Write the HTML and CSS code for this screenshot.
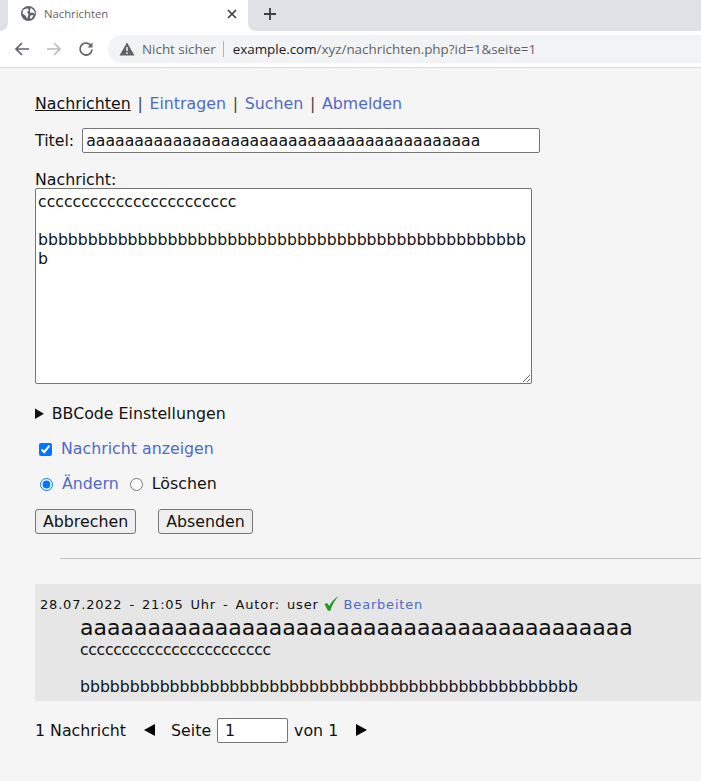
FILE: index.html
```html
<!DOCTYPE html>
<html lang="de">
<head>
  <meta charset="UTF-8">
  <title>Nachrichten</title>
  <link rel="stylesheet" href="styles.css">
</head>
<body>

  <!-- Browser tab strip -->
  <div class="tabstrip">
    <div class="tab-edge"></div>
    <div class="tab">
      <svg class="favicon" width="15" height="15" viewBox="0 0 16 16">
        <circle cx="8" cy="8" r="8" fill="#5f6368"/>
        <path d="M2.5 4 L7 2.5 L8.5 4.5 L6.5 6.5 L8 9 L6.5 13.5 L5 10.5 L1.5 8 Z M10.5 1.8 L14 5 L14.8 8.5 L12 7 L10 7.5 L9.5 5 Z M10 10 L13.5 9.5 L11.5 13 L9.5 13.5 Z" fill="#fff"/>
      </svg>
      <span class="tab-title">Nachrichten</span>
      <svg class="tab-close" width="10" height="10" viewBox="0 0 10 10">
        <path d="M1 1 L9 9 M9 1 L1 9" stroke="#3c4043" stroke-width="1.7" fill="none"/>
      </svg>
    </div>
    <div class="tab-rest">
      <svg class="new-tab" width="12" height="12" viewBox="0 0 12 12">
        <path d="M6 0 V12 M0 6 H12" stroke="#3c4043" stroke-width="1.8" fill="none"/>
      </svg>
    </div>
  </div>

  <!-- Browser address bar -->
  <div class="toolbar">
    <svg class="nav-icon" width="16" height="16" viewBox="0 0 16 16">
      <path d="M15 8 H2 M8 2 L2 8 L8 14" stroke="#5f6368" stroke-width="1.7" fill="none"/>
    </svg>
    <svg class="nav-icon" width="16" height="16" viewBox="0 0 16 16">
      <path d="M1 8 H14 M8 2 L14 8 L8 14" stroke="#b9bbbe" stroke-width="1.7" fill="none"/>
    </svg>
    <svg class="nav-icon nav-last" width="16" height="16" viewBox="0 0 16 16">
      <path d="M13.2 5 A6 6 0 1 0 14 8.5" stroke="#5f6368" stroke-width="1.7" fill="none"/>
      <path d="M14.5 1.5 V6.5 H9.5 Z" fill="#5f6368"/>
    </svg>
    <div class="omnibox">
      <svg class="warn" width="16" height="14" viewBox="0 0 16 14">
        <path d="M8 0.5 L15.5 13.5 H0.5 Z" fill="#5f6368"/>
        <path d="M8 5 V9 M8 10.2 V12" stroke="#f1f3f4" stroke-width="1.5" fill="none"/>
      </svg>
      <span class="not-secure">Nicht sicher</span>
      <span class="url"><span class="host">example.com</span>/xyz/nachrichten.php?id=1&amp;seite=1</span>
    </div>
  </div>

  <div class="page">
    <div class="menu">
      <a href="#" class="current">Nachrichten</a> |
      <a href="#">Eintragen</a> |
      <a href="#">Suchen</a> |
      <a href="#">Abmelden</a>
    </div>

    <form class="edit-form">
      <div class="title-row">
        <label for="titel">Titel:</label>
        <input type="text" id="titel" value="aaaaaaaaaaaaaaaaaaaaaaaaaaaaaaaaaaaaaaaaa">
      </div>

      <label class="msg-label" for="nachricht">Nachricht:</label>
      <textarea id="nachricht">ccccccccccccccccccccccc

bbbbbbbbbbbbbbbbbbbbbbbbbbbbbbbbbbbbbbbbbbbbbbbbbb</textarea>

      <details class="bbcode">
        <summary>BBCode Einstellungen</summary>
      </details>

      <div class="check-row">
        <input type="checkbox" id="anzeigen" checked>
        <label for="anzeigen" class="blue">Nachricht anzeigen</label>
      </div>

      <div class="radio-row">
        <input type="radio" name="aktion" id="aendern" checked>
        <label for="aendern" class="blue">Ändern</label>
        <input type="radio" name="aktion" id="loeschen">
        <label for="loeschen">Löschen</label>
      </div>

      <div class="buttons">
        <button type="button">Abbrechen</button>
        <button type="button">Absenden</button>
      </div>
    </form>

    <hr class="divider">

    <div class="entry">
      <div class="entry-meta">
        28.07.2022 - 21:05 Uhr - Autor: user
        <svg class="tick" width="15" height="17" viewBox="0 0 15 17">
          <path d="M0.5 9 L3 8 L5.2 11 C7.5 7 10.5 3.5 14.5 1 C11 5 8 10 6.3 15.8 L4 15.8 Z" fill="#1e9a1e"/>
        </svg>
        <a href="#">Bearbeiten</a>
      </div>
      <div class="entry-body">
        <div class="entry-title">aaaaaaaaaaaaaaaaaaaaaaaaaaaaaaaaaaaaaaaaa</div>
        <div class="entry-text"><span class="narrow">ccccccccccccccccccccccc</span><br><br>bbbbbbbbbbbbbbbbbbbbbbbbbbbbbbbbbbbbbbbbbbbbbbbbbb</div>
      </div>
    </div>

    <div class="pager">
      <span>1 Nachricht</span>
      <span class="arrow-left"></span>
      <span>Seite</span>
      <input type="text" value="1">
      <span>von 1</span>
      <span class="arrow-right"></span>
    </div>
  </div>

</body>
</html>
```

FILE: styles.css
```css
html, body {
  margin: 0;
  padding: 0;
}

body {
  width: 701px;
  height: 781px;
  overflow: hidden;
  background-color: #f5f5f5;
  color: #111;
  font-family: "DejaVu Sans", Verdana, sans-serif;
  font-size: 15.8px;
}

a {
  color: #4f6ac8;
  text-decoration: none;
}

/* browser chrome */
.tabstrip {
  display: flex;
  height: 31px;
  background-color: #fff;
}

.tab-edge {
  width: 8px;
  background-color: #dee1e6;
  border-bottom-right-radius: 8px;
}

.tab {
  display: flex;
  align-items: center;
  box-sizing: border-box;
  width: 240px;
  padding: 0 11px 4px 13px;
}

.favicon {
  flex: none;
}

.tab-title {
  flex: 1;
  margin-left: 8px;
  color: #5f6368;
  font-family: "Open Sans", sans-serif;
  font-size: 11.3px;
}

.tab-rest {
  display: flex;
  flex: 1;
  align-items: center;
  padding: 0 0 3px 16px;
  background-color: #dee1e6;
  border-bottom-left-radius: 8px;
}

.toolbar {
  display: flex;
  align-items: center;
  box-sizing: border-box;
  height: 37px;
  padding-left: 14px;
  background-color: #fff;
  border-bottom: 1px solid #dadce0;
}

.nav-icon {
  flex: none;
  margin-right: 16px;
}

.nav-last {
  margin-right: 14px;
}

.omnibox {
  display: flex;
  flex: 1;
  align-items: center;
  height: 28px;
  padding-left: 11px;
  background-color: #f1f3f4;
  border-radius: 14px 0 0 14px;
  font-family: "Open Sans", sans-serif;
  font-size: 13.4px;
  color: #5f6368;
}

.not-secure {
  margin-left: 7px;
  padding-right: 7px;
  margin-right: 9px;
  border-right: 1px solid #b0b3b7;
  line-height: 16px;
}

.host {
  color: #202124;
}

/* page */
.page {
  padding: 26px 0 0 35px;
}

.menu {
  color: #444;
  line-height: 20px;
  word-spacing: 1.7px;
}

.menu .current {
  color: #111;
  text-decoration: underline;
}

.title-row {
  display: flex;
  align-items: center;
  margin-top: 14px;
}

.title-row input {
  box-sizing: border-box;
  width: 458px;
  height: 25px;
  margin-left: 8px;
  padding: 1px 3px;
  border: 1px solid #767676;
  border-radius: 2px;
  background-color: #fff;
  font-family: inherit;
  font-size: 15.7px;
  color: #111;
}

.msg-label {
  display: block;
  margin-top: 18px;
  line-height: 17px;
}

textarea {
  display: block;
  box-sizing: border-box;
  width: 497px;
  height: 196px;
  padding: 3px 2px 2px;
  border: 1px solid #767676;
  border-radius: 2px;
  background-color: #fff;
  font-family: inherit;
  font-size: 15.7px;
  line-height: 19px;
  color: #111;
}

.bbcode {
  margin-top: 20px;
  line-height: 20px;
}

.bbcode summary {
  cursor: pointer;
}

.check-row,
.radio-row {
  display: flex;
  align-items: center;
  line-height: 20px;
}

.check-row {
  margin-top: 15px;
}

.check-row input {
  width: 13px;
  height: 13px;
  margin: 0 9px 0 4px;
}

.radio-row {
  margin-top: 15px;
}

.radio-row input {
  width: 13px;
  height: 13px;
  margin: 0 9px 0 5px;
}

.radio-row label + input {
  margin-left: 11px;
}

.blue {
  color: #4f6ac8;
}

.buttons {
  display: flex;
  gap: 22px;
  margin-top: 15px;
}

button {
  box-sizing: border-box;
  height: 25px;
  padding: 0 7px;
  border: 1px solid #767676;
  border-radius: 3px;
  background-color: #efefef;
  font-family: inherit;
  font-size: 15.8px;
  color: #111;
}

.divider {
  height: 1px;
  margin: 24px 0 0 25px;
  border: none;
  background-color: #c0c0c0;
}

.entry {
  box-sizing: border-box;
  height: 117px;
  margin-top: 25px;
  padding: 12px 0 0 5px;
  background-color: #e6e6e6;
  overflow: hidden;
}

.entry-meta {
  display: flex;
  align-items: center;
  gap: 5px;
  height: 17px;
  font-size: 13px;
  letter-spacing: 0.8px;
  word-spacing: 2.1px;
}

.tick {
  margin-top: -3px;
}

.entry-body {
  margin-left: 40px;
}

.entry-title {
  font-size: 22px;
  line-height: 24px;
  margin-top: 3px;
}

.entry-text {
  margin-top: 1px;
  font-size: 15.7px;
  line-height: 18.5px;
}

.narrow {
  letter-spacing: -0.33px;
}

.pager {
  display: flex;
  align-items: center;
  height: 26px;
  margin-top: 16px;
}

.pager input {
  box-sizing: border-box;
  width: 71px;
  height: 25px;
  margin: 0 6px 0 6px;
  padding: 1px 7px;
  border: 1px solid #767676;
  border-radius: 2px;
  background-color: #fff;
  font-family: inherit;
  font-size: 15.8px;
  color: #111;
}

.arrow-left {
  width: 0;
  height: 0;
  margin: 0 16px 0 18px;
  border-top: 6px solid transparent;
  border-bottom: 6px solid transparent;
  border-right: 11px solid #000;
}

.arrow-right {
  width: 0;
  height: 0;
  margin-left: 18px;
  border-top: 6px solid transparent;
  border-bottom: 6px solid transparent;
  border-left: 11px solid #000;
}
```
